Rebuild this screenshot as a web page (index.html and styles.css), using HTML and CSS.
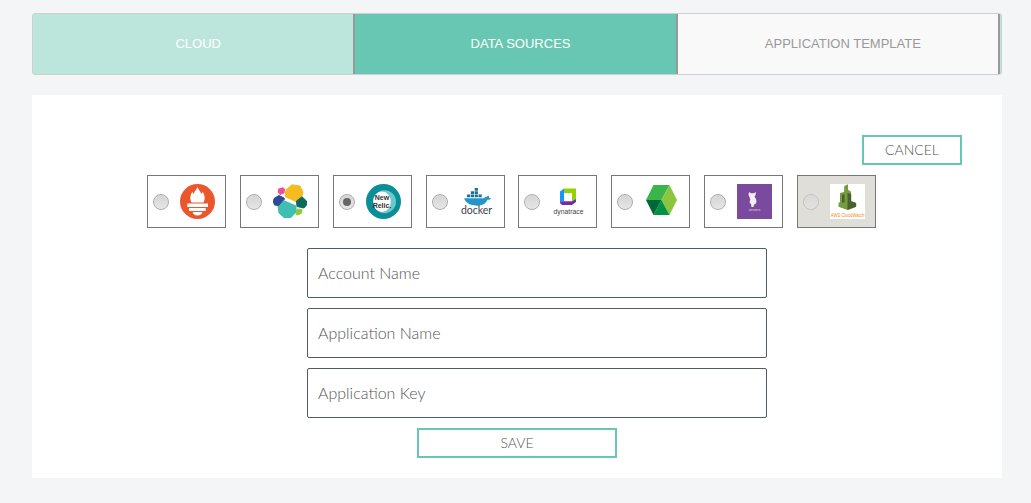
FILE: index.html
```html
<!DOCTYPE html>
<html lang="en">
<head>
<meta charset="utf-8">
<title>Data Sources</title>
<link rel="stylesheet" href="styles.css">
</head>
<body>
<main class="page">
  <nav class="steps">
    <div class="step step-done">CLOUD</div>
    <div class="step step-active">DATA SOURCES</div>
    <div class="step step-todo">APPLICATION TEMPLATE</div>
  </nav>
  <section class="panel">
    <div class="actions"><button class="btn btn-cancel" type="button">CANCEL</button></div>
    <div class="sources">
      <label class="source"><input class="radio" type="radio" name="src">
        <svg class="logo" viewBox="0 0 35 35"><circle cx="17.5" cy="17.5" r="17.5" fill="#e9572c"/><path d="M17.500 2.500C18 6 21 7 21 10c1-.5 1.500-1.500 1.500-2.500 2.500 3.500 3 7.500 1 11h-12c-2-3.500-1.500-7.500 1-11 0 1 .5 2 1.500 2.500 0-3 3-4 3.500-7.500z" fill="#fff"/><path d="M7.300 19.500H28V23H7.300zM9 24h16.700v3H9zM12.700 28h9.600a4.800 3.500 0 0 1-9.600 0z" fill="#fff"/></svg>
      </label>
      <label class="source"><input class="radio" type="radio" name="src">
        <svg class="logo" viewBox="0 0 35 35"><g stroke-width="1" stroke-linejoin="round"><path d="M13 6l6-5.200 8 1.200 3 6-1 4-5 6-12-5.500z" fill="#f6bb1f" stroke="#f6bb1f"/><path d="M5 22l6-5.200 12 5.200v6l-5 5.500h-7L6 29z" fill="#3ebfb1" stroke="#3ebfb1"/><path d="M5.500 5L10 3.800 11.500 5 11 9l-4 1.500-1.800-2.300z" fill="#ec4e99" stroke="#ec4e99"/><path d="M1 14.500l5-3 5 2.500.5 1-6 6.500-4-.5-1-3z" fill="#2d4a96" stroke="#2d4a96"/><path d="M23.500 17L29 12.800l4.500 4.200v4L31 24l-7-1.500z" fill="#0f6a5b" stroke="#0f6a5b"/><path d="M24 25l5 .5-.5 3.500-3.500 2-2-.5z" fill="#93c83e" stroke="#93c83e"/></g></svg>
      </label>
      <label class="source"><input class="radio" type="radio" name="src" checked>
        <svg class="logo" viewBox="0 0 35 35"><circle cx="17.500" cy="17.500" r="17.500" fill="#0b8e97"/><circle cx="18.500" cy="17.700" r="11.500" fill="#6cc9ca"/><ellipse cx="16" cy="17.700" rx="8.800" ry="10.200" fill="#fff"/><text class="nr" x="16" y="16">New</text><text class="nr" x="16" y="24">Relic.</text></svg>
      </label>
      <label class="source"><input class="radio" type="radio" name="src">
        <svg class="logo" viewBox="0 0 35 35"><g transform="translate(4 3.500) scale(.8 .74)"><path d="M1.500 14.500h25c.4-1.400 2-2 3.200-1.800.5-1 1.300-1.700 2-2 .8 1 1 2.300.7 3 1 .1 2 .4 2.600 1-1 1.600-2.800 2-4.500 1.800-2 5.400-6.500 8-12.500 8-6 0-11-1.500-14.300-5.500-1.300-1.600-2-3-2.200-4.500z" fill="#2496c8"/><path d="M5 9.500h4v3.800H5zM9.800 9.500h4v3.800h-4zM14.600 9.500h4v3.800h-4zM9.800 5h4v3.800h-4zM14.600 5h4v3.800h-4zM14.600.7h4v3.600h-4zM19.400 9.500h4v3.800h-4z" fill="#1b6f9c"/></g><text class="dk" x="17.500" y="29.500">docker</text></svg>
      </label>
      <label class="source"><input class="radio" type="radio" name="src">
        <svg class="logo" viewBox="0 0 35 35"><path d="M13 4.500h12V15l-4 2.500V9h-8z" fill="#93d100"/><path d="M9 7.500l4-3V17H9z" fill="#1496ff"/><path d="M9 17.200h12l4-2.200v3l-4 3H11l-2-2z" fill="#6f2da8"/><text class="dt" x="17.500" y="30">dynatrace</text></svg>
      </label>
      <label class="source"><input class="radio" type="radio" name="src">
        <svg class="logo" viewBox="0 0 35 35"><path d="M9.500 1h16L17.500 16H2z" fill="#39b54a"/><path d="M25.500 1L33 16l-7.500 15-8-15z" fill="#8cc63f"/><path d="M25.500 31h-16l8-15z" fill="#009245"/><path d="M9.500 31L2 16h15.500z" fill="#006837"/></svg>
      </label>
      <label class="source"><input class="radio" type="radio" name="src">
        <svg class="logo" viewBox="0 0 35 35"><rect width="35" height="35" fill="#7a4a9e"/><path d="M12 8l2 1.200h3l2-1.200-.5 3-1 1.500 1.500 2.500.5 3-1 2-1.500.5-.5 2.500h-2l-.5-3-1.500-1.500.8-3-.8-2.500-1-2z" fill="#f4eff7"/><text class="sp" x="17.500" y="26.500">servers</text></svg>
      </label>
      <label class="source source-disabled"><input class="radio" type="radio" name="src" disabled>
        <svg class="logo" viewBox="0 0 35 35"><rect width="35" height="35" fill="#fff"/><path d="M10 9l4-1 .3-6 3.700-1.800v5.500l3 2v9l5 2.200v3.800L17.500 26 8.500 22.800v-4l1.500-.5z" fill="#759c3e"/><path d="M17.500 .3v8.800l3.700 1v7.500l5 1.500v3.600L17.500 26z" fill="#4b612c"/><path d="M12 10.500h2.500v8H12z" fill="#4b612c"/><text class="aw" x="17.500" y="33" textLength="33.500" lengthAdjust="spacingAndGlyphs">AWS CloudWatch</text></svg>
      </label>
    </div>
    <form class="form">
      <input class="field" type="text" placeholder="Account Name">
      <input class="field" type="text" placeholder="Application Name">
      <input class="field" type="text" placeholder="Application Key">
      <button class="btn btn-save" type="button">SAVE</button>
    </form>
  </section>
</main>
</body>
</html>
```
FILE: styles.css
```css
* { box-sizing: border-box; }
html, body { margin: 0; height: 100%; }
body { background: #f4f5f7; font-family: "Lato", "Liberation Sans", sans-serif; }
.page { width: 1031px; height: 503px; padding: 13px 29px 25px 32px; overflow: hidden; }

.steps {
  display: flex;
  height: 62px;
  border: 1px solid #cfcfcf;
  border-radius: 3px;
  background: #bce6dc;
  overflow: hidden;
}
.step {
  flex: 0 0 33.3%;
  display: flex;
  align-items: center;
  justify-content: center;
  padding-left: 10px;
  padding-bottom: 1px;
  border-right: 2px solid #999;
  font: 13px "Liberation Sans", sans-serif;
}
.step-done { background: #bce6dc; color: #fff; }
.step-active { background: #68c7b3; color: #fff; }
.step-todo { background: #f9f9f9; color: #999; }

.panel {
  margin-top: 20px;
  height: 383px;
  padding: 40px 40px 0;
  background: #fff;
}
.actions { display: flex; justify-content: flex-end; }
.btn {
  height: 30px;
  border: 2px solid #68c7b3;
  background: #fff;
  color: #555;
  font: 300 14px "Lato", "Liberation Sans", sans-serif;
  padding: 0 0 2px;
}
.btn-cancel { width: 100px; }

.sources {
  display: flex;
  justify-content: center;
  gap: 13.857px;
  margin: 10px 0 20px;
  padding-right: 11px;
}
.source {
  flex: none;
  width: 79px;
  height: 53px;
  display: flex;
  align-items: center;
  padding-left: 5px;
  gap: 11px;
  border: 1px solid #777;
  background: #fff;
}
.source-disabled { background: #e0ded9; }
.radio {
  appearance: none;
  flex: none;
  width: 16px;
  height: 16px;
  margin: 0;
  display: grid;
  place-items: center;
  border: 1px solid #aaa;
  border-radius: 50%;
  background: linear-gradient(#d4d4d4, #e6e6e6);
  box-shadow: inset 0 0 1px #fff;
}
.radio:checked::before {
  content: "";
  width: 8px;
  height: 8px;
  border-radius: 50%;
  background: #666;
}
.radio:disabled { opacity: .5; }
.logo { flex: none; width: 35px; height: 35px; }
.logo text { text-anchor: middle; font-family: "Liberation Sans", sans-serif; }
.logo .nr { font-size: 7px; font-weight: 700; fill: #333; font-family: "Liberation Sans Narrow", "Liberation Sans", sans-serif; }
.logo .dk { font-size: 10.500px; font-weight: 400; fill: #3c4448; font-family: "Lato", sans-serif; }
.logo .dt { font-size: 6.800px; fill: #444; }
.logo .sp { font-size: 3.500px; fill: #e4d6ec; }
.logo .aw { font-size: 4.500px; fill: #f08a24; }

.form {
  display: flex;
  flex-direction: column;
  align-items: flex-start;
  gap: 10px;
  padding-left: 235px;
}
.field {
  width: 460px;
  height: 50px;
  padding: 0 10px 2px;
  border: 1px solid #4f5b66;
  border-radius: 2px;
  background: #fff;
  font: 300 16px "Lato", "Liberation Sans", sans-serif;
  color: #555;
}
.field::placeholder { color: #555; opacity: 1; }
.btn-save { width: 200px; margin-left: 110px; }
```
